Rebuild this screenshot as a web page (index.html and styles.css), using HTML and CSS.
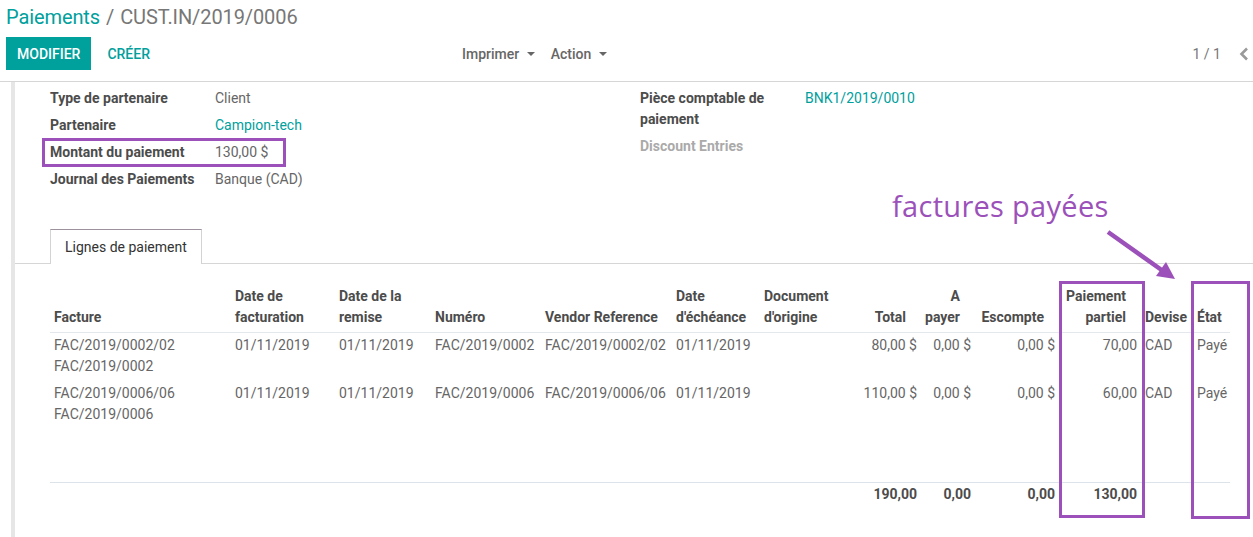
FILE: index.html
```html
<!DOCTYPE html>
<html lang="fr">
<head>
  <meta charset="UTF-8">
  <title>Paiements - CUST.IN/2019/0006</title>
  <link rel="stylesheet" href="styles.css">
</head>
<body>
  <div class="control-panel">
    <ol class="breadcrumb">
      <li><a href="#">Paiements</a></li>
      <li class="sep">/</li>
      <li class="active">CUST.IN/2019/0006</li>
    </ol>
    <div class="cp-bar">
      <div class="cp-buttons">
        <button class="btn-primary">Modifier</button>
        <button class="btn-link">Créer</button>
      </div>
      <div class="cp-sidebar">
        <span class="dropdown">Imprimer <span class="caret"></span></span>
        <span class="dropdown">Action <span class="caret"></span></span>
      </div>
      <div class="cp-pager">
        <span class="pager-value">1 / 1</span>
        <svg class="chevron" width="10" height="14" viewBox="0 0 10 14"><path d="M8 1.5 L2.5 7 L8 12.5" fill="none" stroke="#9a9a9a" stroke-width="2.6"/></svg>
      </div>
    </div>
  </div>

  <div class="form-view">
    <div class="sheet">
      <div class="groups">
        <table class="group">
          <tr><td class="label">Type de partenaire</td><td class="value">Client</td></tr>
          <tr><td class="label">Partenaire</td><td class="value"><a href="#">Campion-tech</a></td></tr>
          <tr><td class="label">Montant du paiement</td><td class="value">130,00 $</td></tr>
          <tr><td class="label">Journal des Paiements</td><td class="value">Banque (CAD)</td></tr>
        </table>
        <table class="group">
          <tr><td class="label">Pièce comptable de paiement</td><td class="value"><a href="#">BNK1/2019/0010</a></td></tr>
          <tr><td class="label muted">Discount Entries</td><td class="value"></td></tr>
        </table>
      </div>

      <div class="notebook">
        <ul class="tabs">
          <li class="tab active">Lignes de paiement</li>
        </ul>
        <table class="lines">
          <colgroup>
            <col style="width:181px"><col style="width:104px"><col style="width:96px"><col style="width:110px">
            <col style="width:131px"><col style="width:88px"><col style="width:80px"><col style="width:81px">
            <col style="width:54px"><col style="width:84px"><col style="width:82px"><col style="width:52px">
            <col style="width:37px">
          </colgroup>
          <thead>
            <tr>
              <th>Facture</th>
              <th>Date de facturation</th>
              <th>Date de la remise</th>
              <th>Numéro</th>
              <th>Vendor Reference</th>
              <th>Date d'échéance</th>
              <th>Document d'origine</th>
              <th class="num">Total</th>
              <th class="num">A payer</th>
              <th class="num">Escompte</th>
              <th class="num">Paiement partiel</th>
              <th>Devise</th>
              <th>État</th>
            </tr>
          </thead>
          <tbody>
            <tr>
              <td>FAC/2019/0002/02 FAC/2019/0002</td>
              <td>01/11/2019</td>
              <td>01/11/2019</td>
              <td>FAC/2019/0002</td>
              <td>FAC/2019/0002/02</td>
              <td>01/11/2019</td>
              <td></td>
              <td class="num">80,00 $</td>
              <td class="num">0,00 $</td>
              <td class="num">0,00 $</td>
              <td class="num">70,00</td>
              <td>CAD</td>
              <td>Payé</td>
            </tr>
            <tr>
              <td>FAC/2019/0006/06 FAC/2019/0006</td>
              <td>01/11/2019</td>
              <td>01/11/2019</td>
              <td>FAC/2019/0006</td>
              <td>FAC/2019/0006/06</td>
              <td>01/11/2019</td>
              <td></td>
              <td class="num">110,00 $</td>
              <td class="num">0,00 $</td>
              <td class="num">0,00 $</td>
              <td class="num">60,00</td>
              <td>CAD</td>
              <td>Payé</td>
            </tr>
            <tr class="filler"><td colspan="13"></td></tr>
          </tbody>
          <tfoot>
            <tr>
              <td></td><td></td><td></td><td></td><td></td><td></td><td></td>
              <td class="num">190,00</td>
              <td class="num">0,00</td>
              <td class="num">0,00</td>
              <td class="num">130,00</td>
              <td></td><td></td>
            </tr>
          </tfoot>
        </table>
      </div>
    </div>
  </div>

  <!-- annotations posées sur la capture -->
  <div class="mark mark-amount"></div>
  <div class="mark mark-partial"></div>
  <div class="mark mark-state"></div>
  <div class="note">factures payées</div>
  <svg class="note-arrow" width="80" height="60" viewBox="0 0 80 60">
    <line x1="3" y1="3" x2="58" y2="42" stroke="#9b51b9" stroke-width="4.5"/>
    <polygon points="70,50 51,47 61,33" fill="#9b51b9"/>
  </svg>
</body>
</html>
```

FILE: styles.css
```css
body {
  margin: 0;
  height: 537px;
  overflow: hidden;
  background: #fff;
  font-family: Roboto, "Noto Sans", sans-serif;
  font-size: 14px;
  color: #666;
  position: relative;
}
a {
  color: #00a09d;
  text-decoration: none;
}

/* control panel */
.control-panel {
  padding: 4px 0 11px 6px;
  border-bottom: 1px solid #d6d6d6;
}
.breadcrumb {
  list-style: none;
  margin: 0;
  padding: 0;
  display: flex;
  gap: 6px;
  font-size: 20px;
  line-height: 26px;
  letter-spacing: -0.1px;
}
.breadcrumb .sep,
.breadcrumb .active {
  color: #777;
}
.cp-bar {
  display: grid;
  grid-template-columns: 456px auto 1fr;
  align-items: center;
  margin-top: 7px;
}
.cp-buttons {
  display: flex;
  align-items: center;
  gap: 2px;
}
.btn-primary,
.btn-link {
  font-family: inherit;
  font-size: 14px;
  font-weight: 500;
  text-transform: uppercase;
  border: none;
  height: 33px;
  padding: 0 11px;
  cursor: pointer;
}
.btn-primary {
  background: #00a09d;
  color: #fff;
}
.btn-link {
  background: none;
  color: #00a09d;
  padding: 0 14px;
}
.cp-sidebar {
  display: flex;
  gap: 16px;
}
.dropdown {
  color: #666;
  font-weight: 500;
}
.caret {
  display: inline-block;
  width: 0;
  height: 0;
  margin-left: 4px;
  vertical-align: 3px;
  border-top: 4px solid #666;
  border-left: 4px solid transparent;
  border-right: 4px solid transparent;
}
.cp-pager {
  display: flex;
  justify-content: flex-end;
  align-items: center;
  gap: 18px;
  padding-right: 4px;
}
.pager-value {
  color: #777;
}

/* form */
.form-view {
  padding-left: 11px;
}
.sheet {
  border-left: 4px solid #e6e6e6;
  padding: 6px 23px 0 35px;
  height: 460px;
}
.groups {
  display: grid;
  grid-template-columns: 590px 1fr;
}
.group {
  border-collapse: collapse;
  align-self: start;
}
.group td {
  padding: 0 0 6px 0;
  line-height: 21px;
  vertical-align: top;
}
.group .label {
  width: 165px;
  padding-right: 20px;
  box-sizing: border-box;
  font-weight: bold;
  color: #4c4c4c;
}
.group .label.muted {
  color: #aaa;
}

.notebook {
  margin-top: 33px;
}
.tabs {
  list-style: none;
  margin: 0 -23px 0 -35px;
  padding: 0 0 0 35px;
  border-bottom: 1px solid #d6d6d6;
  display: flex;
}
.tab {
  padding: 7px 14px 6px;
  line-height: 21px;
  color: #333;
  border: 1px solid #d3d3d3;
  border-top-color: #9e919e;
  border-bottom: none;
  margin-bottom: -1px;
  background: #fff;
}

.lines {
  margin-top: 22px;
  width: 1180px;
  table-layout: fixed;
  border-collapse: collapse;
}
.lines th,
.lines td {
  line-height: 21px;
  text-align: left;
  vertical-align: top;
}
.lines th {
  padding: 0 4px 4px;
  vertical-align: bottom;
  font-weight: bold;
  color: #4c4c4c;
  border-bottom: 1px solid #e4e8ec;
}
.lines td {
  padding: 2px 4px 4px;
}
.lines th.num {
  text-align: right;
  padding-right: 15px;
}
.lines td.num {
  text-align: right;
}
.lines .filler td {
  height: 53px;
  padding: 0;
}
.lines tfoot td {
  padding: 1px 4px;
  border-top: 1px solid #dde3ea;
  font-weight: bold;
  color: #4c4c4c;
}

/* annotations */
.mark {
  position: absolute;
  border: 3px solid #9b51b9;
  box-sizing: border-box;
}
.mark-amount {
  left: 42px;
  top: 138px;
  width: 244px;
  height: 29px;
}
.mark-partial {
  left: 1059px;
  top: 281px;
  width: 86px;
  height: 237px;
}
.mark-state {
  left: 1191px;
  top: 281px;
  width: 59px;
  height: 238px;
}
.note {
  position: absolute;
  left: 892px;
  top: 187px;
  font-family: "Open Sans", sans-serif;
  font-size: 29px;
  line-height: 38px;
  color: #9b51b9;
  letter-spacing: 0.3px;
}
.note-arrow {
  position: absolute;
  left: 1105px;
  top: 229px;
}
```
